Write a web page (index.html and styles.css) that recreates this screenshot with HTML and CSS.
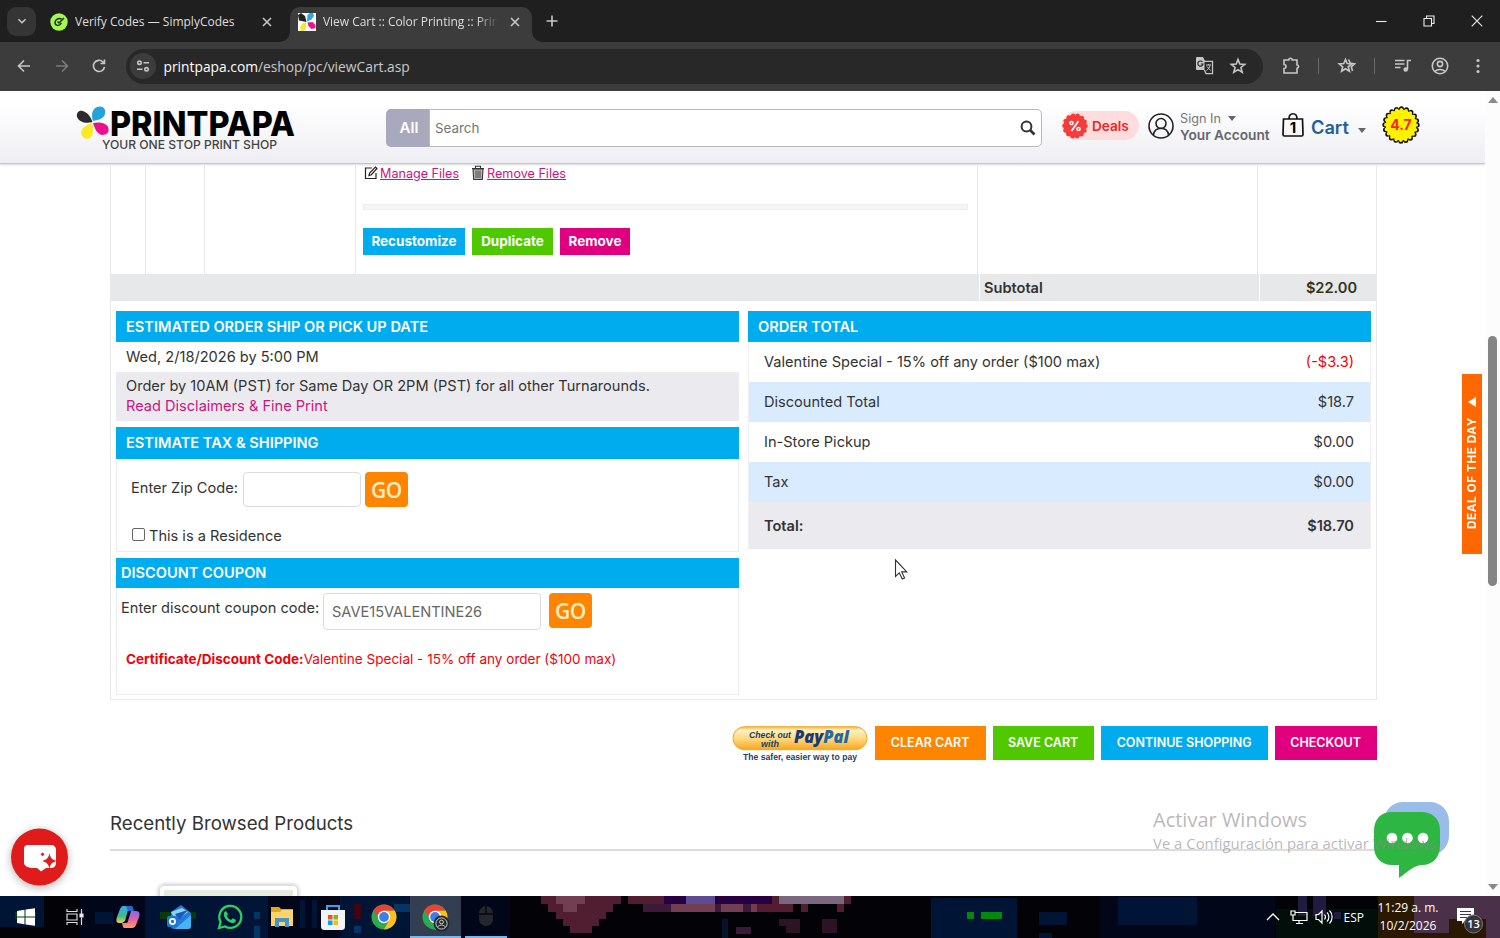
FILE: index.html
```html
<!DOCTYPE html>
<html lang="en">
<head>
    <meta charset="UTF-8">
    <title>View Cart :: Color Printing :: PrintPapa</title>
    <link rel="stylesheet" href="styles.css">
</head>
<body>
    <!-- Browser tabs -->
    <div class="tab-strip">
        <div class="tab-search">
            <svg width="12" height="12" viewBox="0 0 12 12"><path class="line" d="M2.5 4.2L6 7.7l3.5-3.5"/></svg>
        </div>
        <div class="tab">
            <svg width="18" height="18" viewBox="0 0 18 18">
                <circle cx="9" cy="9" r="8.7" fill="#a6f750"/>
                <path d="M11.5 6C8.500 4.500 5 6.500 5 9.500c0 3.500 4.500 4 6.500.5M7.500 8.500l1.500 1.500 5-5" fill="none" stroke="#17330a" stroke-width="1.500"/>
            </svg>
            <span class="tab-title t1">Verify Codes — SimplyCodes</span>
            <svg class="tab-close" width="12" height="12" viewBox="0 0 12 12"><path class="line" d="M2 2l8 8M10 2l-8 8"/></svg>
        </div>
        <div class="tab active">
            <svg width="18" height="18" viewBox="0 0 18 18">
                <rect width="18" height="18" fill="#fff"/>
                <path d="M8.500 9L1 7.500 0 2l3-2 4 3z" fill="#222"/>
                <path d="M9 8.500L9.500 2 12 0h3l1 3-3 4z" fill="#2aa9dc"/>
                <path d="M8 9.500L8 16l-3 2H3l-1-4 3-4z" fill="#fbe51d"/>
                <path d="M9.500 9.500l5-.5 3 3v3l-4 1-3-3z" fill="#ec118c"/>
            </svg>
            <span class="tab-title t2">View Cart :: Color Printing :: Prin</span>
            <svg class="tab-close" width="12" height="12" viewBox="0 0 12 12"><path class="line" d="M2 2l8 8M10 2l-8 8"/></svg>
        </div>
        <svg class="new-tab" width="14" height="14" viewBox="0 0 14 14"><path class="line" d="M7 1.500v11M1.500 7h11"/></svg>
        <div class="window-buttons">
            <svg width="12" height="12" viewBox="0 0 12 12"><path class="thin" d="M1 6.500h10.500"/></svg>
            <svg width="12" height="12" viewBox="0 0 12 12"><path class="thin" d="M1 3.500h7.500V11H1zM3.500 3.500V1H11v7.500H8.500"/></svg>
            <svg width="12" height="12" viewBox="0 0 12 12"><path class="thin" d="M.7.7l10.600 10.600M11.300.7L.7 11.300"/></svg>
        </div>
    </div>

    <!-- Address bar -->
    <div class="toolbar">
        <svg class="nav-icon" width="16" height="16" viewBox="0 0 16 16"><path class="line" d="M14 8H2.500M8 2.500L2.500 8 8 13.500"/></svg>
        <svg class="nav-icon dim" width="16" height="16" viewBox="0 0 16 16"><path class="line" d="M2 8h11.500M8 2.500L13.500 8 8 13.500"/></svg>
        <svg class="nav-icon" width="16" height="16" viewBox="0 0 16 16"><path class="line" d="M13.500 9A5.600 5.600 0 1 1 12 4l1.500 1.500M13.500 1.500v4h-4"/></svg>
        <div class="address">
            <div class="site-info">
                <svg width="14" height="14" viewBox="0 0 14 14"><circle class="line" cx="3.500" cy="3.700" r="1.700"/><circle class="line" cx="10.500" cy="10.300" r="1.700"/><path class="line" d="M7.500 3.700h5.500M1 10.300h5.500"/></svg>
            </div>
            <span class="url">printpapa.com<span>/eshop/pc/viewCart.asp</span></span>
            <svg class="translate" width="18" height="18" viewBox="0 0 18 18">
                <path d="M1 0h6l2 4h-.5v9H1a1 1 0 0 1-1-1V1a1 1 0 0 1 1-1z" fill="#c7c7c7"/>
                <path d="M8 4.300h8.500v12.400H10L8.500 13" fill="none" stroke="#c7c7c7" stroke-width="1.300"/>
                <path d="M6.500 5A2.600 2.600 0 1 0 7 7H4.800" fill="none" stroke="#292929" stroke-width="1.200"/>
                <path d="M10 8h5M12.500 7v1M11 9.500l3.500 4M14 8.500c-.5 2-2 4-3.500 5" fill="none" stroke="#c7c7c7"/>
            </svg>
            <svg class="star" width="16" height="16" viewBox="0 0 16 16"><path class="line" d="M8 1.500l1.800 4.600 4.900.3-3.800 3.100 1.300 4.800L8 11.600l-4.200 2.700 1.300-4.800L1.300 6.400l4.900-.3z"/></svg>
        </div>
        <div class="extensions">
            <svg width="18" height="18" viewBox="0 0 18 18"><path class="line" d="M2 3h4.800a1.700 1.700 0 0 1 3.400 0H15v5a1.500 1.500 0 0 1 0 3.200V16H2v-4.500a2 2 0 0 0 0-4z"/></svg>
            <i></i>
            <svg width="18" height="18" viewBox="0 0 18 18"><path class="line" d="M7.500 2.500l1.700 4.100 4.500.3-3.500 2.900 1.200 4.400-3.900-2.400-3.900 2.400 1.100-4.400-3.400-2.900 4.500-.3z"/><path class="line" d="M10.500 2.500l2 3.800 4 .5-3.200 3 1.200 4.200"/></svg>
            <i></i>
            <svg width="18" height="18" viewBox="0 0 18 18"><path class="line" d="M1 3.500h9.500M1 7h9.500M1 10.500h5.500M13.500 12.500V3.500H17"/><circle cx="11.700" cy="12.500" r="2.300" fill="#c7c7c7"/></svg>
            <svg width="18" height="18" viewBox="0 0 18 18"><circle class="line" cx="9" cy="9" r="7.700"/><circle class="line" cx="9" cy="7" r="2.600"/><path class="line" d="M3.800 14.500c2.500-2.700 7.900-2.700 10.400 0"/></svg>
            <svg width="18" height="18" viewBox="0 0 18 18" fill="#c7c7c7"><circle cx="9" cy="3.500" r="1.600"/><circle cx="9" cy="9" r="1.600"/><circle cx="9" cy="14.500" r="1.600"/></svg>
        </div>
    </div>

    <div class="viewport">
        <div class="page">
            <header class="site-header">
                <svg class="logo" width="220" height="50" viewBox="0 0 220 50">
                    <path d="M16.500 18C10 20 3 18 1 13 0 8 4 5 9 8c4 2 6 6 7.500 10z" fill="#2b2a2c"/>
                    <path d="M17 17c-2-6-1-12 4-14 6-2 9 2 8 7-1 4-6 6-12 7z" fill="#22a3dc"/>
                    <path d="M16 19c1 5 2 12-2 15-5 2-9-1-9-6 1-5 6-7 11-9z" fill="#fbe921"/>
                    <path d="M17 19c5-1 12-1 15 4 2 5-1 8-6 8-5-1-7-6-9-12z" fill="#ec0f8d"/>
                    <text class="logo-name" x="34" y="31.500" textLength="185" lengthAdjust="spacingAndGlyphs">PRINTPAPA</text>
                    <text class="logo-tag" x="26" y="45" textLength="175" lengthAdjust="spacingAndGlyphs">YOUR ONE STOP PRINT SHOP</text>
                </svg>
                <div class="search">
                    <span class="search-all">All</span>
                    <div class="search-box">
                        <span>Search</span>
                        <svg width="16" height="16" viewBox="0 0 16 16"><circle cx="6.500" cy="6.500" r="4.900" fill="none" stroke="#333" stroke-width="2"/><path d="M10 10l4.500 4.500" stroke="#333" stroke-width="2.600"/></svg>
                    </div>
                </div>
                <div class="deals">
                    <svg width="26" height="26" viewBox="0 0 26 26">
                        <circle cx="13" cy="13" r="10.800" fill="#f53b3b" stroke="#f53b3b" stroke-width="4" stroke-dasharray="0 4.847" stroke-linecap="round"/>
                        <circle cx="13" cy="13" r="11.500" fill="#f53b3b"/>
                        <path d="M16.500 8l-7 10" stroke="#fff" stroke-width="1.700"/>
                        <circle cx="9.500" cy="10" r="1.600" fill="none" stroke="#fff" stroke-width="1.500"/><circle cx="16.500" cy="16" r="1.600" fill="none" stroke="#fff" stroke-width="1.500"/>
                    </svg>
                    <span>Deals</span>
                </div>
                <svg class="user-icon" width="26" height="26" viewBox="0 0 26 26" fill="none" stroke="#222" stroke-width="1.600"><circle cx="13" cy="13" r="12"/><circle cx="13" cy="10.500" r="5"/><path d="M5.500 22c.3-9 14.700-9 15 0"/></svg>
                <div class="account">
                    <span class="sign-in">Sign In <i class="caret"></i></span>
                    <b>Your Account</b>
                </div>
                <svg class="bag" width="24" height="26" viewBox="0 0 24 26"><path d="M2.500 7h19l.5 15.500c0 1-.5 1.500-1.500 1.500h-17c-1 0-1.500-.5-1.500-1.500zM8 7C8 0 16 0 16 7" fill="none" stroke="#111" stroke-width="1.700"/><text x="12" y="20.500" text-anchor="middle">1</text></svg>
                <span class="cart-link">Cart</span><i class="caret cart-caret"></i>
                <svg class="rating" width="40" height="40" viewBox="0 0 40 40">
                    <circle cx="20" cy="20" r="16.200" fill="#111" stroke="#111" stroke-width="5" stroke-dasharray="0 5.089" stroke-linecap="round"/>
                    <circle cx="20" cy="20" r="15.200" fill="#fff100" stroke="#fff100" stroke-width="3.600" stroke-dasharray="0 4.775" stroke-linecap="round"/>
                    <text x="20" y="25" text-anchor="middle">4.7</text>
                </svg>
            </header>

            <main class="content">
                <div class="cart">
                    <div class="item-row">
                        <div class="col-qty"></div>
                        <div class="col-sku"></div>
                        <div class="col-thumb"></div>
                        <div class="col-detail">
                            <div class="file-links">
                                <svg width="14" height="14" viewBox="0 0 14 14" fill="none" stroke="#222" stroke-width="1.200"><path d="M8 2H1.500v10.500H12V7"/><path d="M5 9.500l.6-2.400L11.500 1 13 2.500 7.300 8.700z"/></svg>
                                <a>Manage Files</a>
                                <svg class="trash" width="14" height="16" viewBox="0 0 14 16" fill="none" stroke="#333" stroke-width="1.100"><path fill="#bbb" d="M2 4h10l-.7 10.500H2.700z"/><path d="M1 3.500h12M4.500 3V1.200h5V3"/><path stroke-width=".9" d="M5 5.500v7.500M7 5.500v7.500M9 5.500v7.500"/></svg>
                                <a>Remove Files</a>
                            </div>
                            <div class="rule"></div>
                            <div class="item-buttons">
                                <span class="btn blue">Recustomize</span>
                                <span class="btn green">Duplicate</span>
                                <span class="btn pink">Remove</span>
                            </div>
                        </div>
                        <div class="col-blank"></div>
                        <div class="col-price"></div>
                    </div>
                    <div class="subtotal">
                        <div class="sub-space"></div>
                        <div class="sub-label">Subtotal</div>
                        <div class="sub-value">$22.00</div>
                    </div>

                    <div class="panels">
                        <div class="left-panels">
                            <h2>ESTIMATED ORDER SHIP OR PICK UP DATE</h2>
                            <p class="ship-date">Wed, 2/18/2026 by 5:00 PM</p>
                            <p class="ship-note">Order by 10AM (PST) for Same Day OR 2PM (PST) for all other Turnarounds.<br><a>Read Disclaimers &amp; Fine Print</a></p>
                            <h2 class="tax-title">ESTIMATE TAX &amp; SHIPPING</h2>
                            <div class="tax-body">
                                <div class="zip-row">
                                    <label>Enter Zip Code:</label>
                                    <div class="input zip"></div>
                                    <span class="go">GO</span>
                                </div>
                                <div class="residence"><i class="checkbox"></i>This is a Residence</div>
                            </div>
                            <h2 class="coupon-title">DISCOUNT COUPON</h2>
                            <div class="coupon-body">
                                <div class="coupon-row">
                                    <label>Enter discount coupon code:</label>
                                    <div class="input code">SAVE15VALENTINE26</div>
                                    <span class="go">GO</span>
                                </div>
                                <p class="coupon-msg"><b>Certificate/Discount Code:</b>Valentine Special - 15% off any order ($100 max)</p>
                            </div>
                        </div>
                        <div class="order-total">
                            <h2>ORDER TOTAL</h2>
                            <div class="total-row"><span>Valentine Special - 15% off any order ($100 max)</span><span class="red">(-$3.3)</span></div>
                            <div class="total-row shade"><span>Discounted Total</span><span>$18.7</span></div>
                            <div class="total-row"><span>In-Store Pickup</span><span>$0.00</span></div>
                            <div class="total-row shade"><span>Tax</span><span>$0.00</span></div>
                            <div class="total-row grand"><span>Total:</span><span>$18.70</span></div>
                        </div>
                    </div>
                </div>

                <div class="actions">
                    <svg class="paypal" width="136" height="38" viewBox="0 0 136 38">
                        <defs><linearGradient id="gold" x2="0" y2="1"><stop offset="0" stop-color="#fdb933"/><stop offset=".15" stop-color="#fff0c4"/><stop offset=".5" stop-color="#ffdb83"/><stop offset="1" stop-color="#fba51c"/></linearGradient></defs>
                        <rect x="1" y=".7" width="134" height="23" rx="11.500" fill="url(#gold)" stroke="#f5a623"/>
                        <text class="pp-small" x="17" y="12" textLength="42" lengthAdjust="spacingAndGlyphs">Check out</text>
                        <text class="pp-small" x="29" y="20.500" textLength="18" lengthAdjust="spacingAndGlyphs">with</text>
                        <text class="pp-name" x="62" y="17" textLength="55" lengthAdjust="spacingAndGlyphs">Pay<tspan fill="#23689f">Pal</tspan></text>
                        <text class="pp-tag" x="11" y="34" textLength="114" lengthAdjust="spacingAndGlyphs">The safer, easier way to pay</text>
                    </svg>
                    <span class="action orange">CLEAR CART</span>
                    <span class="action green save">SAVE CART</span>
                    <span class="action blue continue">CONTINUE SHOPPING</span>
                    <span class="action pink checkout">CHECKOUT</span>
                </div>

                <h3>Recently Browsed Products</h3>
                <div class="product-card"><div></div></div>
            </main>
        </div>
        <div class="scrollbar">
            <i class="arrow-up"></i>
            <i class="thumb"></i>
            <i class="arrow-down"></i>
        </div>

        <div class="deal-tab"><span>DEAL OF THE DAY</span><i></i></div>

        <svg class="red-chat" width="70" height="70" viewBox="0 0 70 70">
            <circle cx="34.500" cy="35" r="28.500" fill="#e01b1b"/>
            <path d="M22.500 23H46c3 0 5 2 5 5v12c0 3-1 6-5 6h-5l-5 3.500-4-3.500h-4c-4 0-9-2-9-5V27c0-3 1.500-4 3.500-4z" fill="#fff"/>
            <path d="M44.500 31c1 5 2 6.500 7.500 8-5.500 1.500-6.500 3-7.500 8-1-5-2.500-6.500-7.500-8 5-1.500 6.500-3 7.500-8zM37.500 30.500l2 1.700-2 2-2-2z" fill="#e01b1b"/>
        </svg>

        <svg class="green-chat" width="78" height="80" viewBox="0 0 78 80">
            <rect x="11" y="2" width="65" height="53" rx="19" fill="#9abce8"/>
            <path d="M19 12h29c12 0 19 7 19 18v16c0 11-7 19-18 19-7 0-12 5-23 13V65h-7C8 65 1 57 1 47V31c0-12 7-19 18-19z" fill="#2db742"/>
            <circle cx="19" cy="38" r="5.300" fill="#fff"/><circle cx="34.500" cy="38" r="5.300" fill="#fff"/><circle cx="50" cy="38" r="5.300" fill="#fff"/>
        </svg>

        <div class="watermark">
            <div class="wm-title">Activar Windows</div>
            <div class="wm-text">Ve a Configuración para activar Windows.</div>
        </div>

        <svg class="cursor" width="14" height="22" viewBox="0 0 14 22"><path d="M1.500 1v16.500l3.800-3.600 3 6.100 2.300-1.100-2.900-6h5.100z" fill="#fff" stroke="#333" stroke-width="1.100"/></svg>
    </div>

    <!-- Windows taskbar -->
    <footer class="taskbar">
        <svg class="wallpaper" width="1500" height="42" viewBox="0 0 1500 42">
            <path fill="#020619" d="M80 0h430v42H80zM1100 0h175v42h-175z"/>
            <path fill="#001535" d="M0 0h44v31H0zM145 0h123v42H145zM931 2h86v40h-86zM1039 16h28v13h-28zM1118 1h79v28h-79zM95 16h18v12H95zM300 4h5v28h-5zM312 4h5v28h-5zM340 0h70v42h-70zM1039 37h13v5h-13z"/>
            <path fill="#063563" d="M254 16h6v7h-6zM254 30h6v12h-6zM354 30h7v7h-7zM394 8h54v8h-54z"/>
            <path fill="#063a08" d="M15 16h21v7H15zM160 16h36v7h-36z"/>
            <path fill="#3d0711" d="M354 8h7v15h-7z"/>
            <path fill="#511d31" d="M541 0h80v8h-8v8h-7v7h-7v7h-7v7h-22v-7h-7v-7h-7v-7h-8V8h-7zM628 0h36v8h-36zM757 8h36v8h-36zM772 0h7v8h-7zM844 0h7v8h-7zM801 8h7v8h-7zM837 8h7v8h-7z"/>
            <path fill="#713f51" d="M556 0h29v8h-8v8h-14V8h-7zM671 8h44v8h-44zM721 8h22v8h-22zM751 8h6v8h-6z"/>
            <path fill="#280041" d="M664 0h108v8H664z"/>
            <path fill="#3b1939" d="M643 8h28v8h-28zM715 8h6v8h-6zM743 8h8v8h-8zM736 31h15v7h-15z"/>
            <path fill="#5f4b91" d="M686 0h29v8h-29z"/>
            <path fill="#7a697e" d="M779 0h65v8h-65z"/>
            <path fill="#2c1424" d="M779 23h21v14h-14v-7h-7zM822 23h15v14h-15z"/>
            <path fill="#07132a" d="M722 23h6v19h-6z"/>
            <path fill="#008a0c" d="M967 16h7v7h-7zM981 16h21v7h-21z"/>
            <path fill="#020e0a" d="M1276 13h102v29h-102z"/>
            <path fill="#211b43" d="M1298 0h9v20h-9zM1313 0h13v20h-13zM1334 16h7v7h-7z"/>
            <path fill="#2b1801" d="M1378 0h122v42h-122z"/>
            <path fill="#4b3049" d="M1414 0h86v42h-14V23h-37v14h-35z"/>
        </svg>
        <div class="apps">
            <div class="app"><svg width="18" height="18" viewBox="0 0 18 18"><path fill="#fff" d="M0 3l7.500-1.200v6.700H0zM8.500 1.600L18 .2v8.300H8.500zM0 9.500h7.500v6.700L0 15zM8.500 9.500H18v8.300l-9.500-1.400z"/></svg></div>
            <div class="app taskview"><svg width="18" height="18" viewBox="0 0 18 18" fill="none" stroke="#ddd" stroke-width="1.200"><path d="M1 1v2.500h10V1M1 17v-2.500h10V17M1 6h10v6H1zM15.500 1v5M15.500 9.500V17"/><path d="M14 6h3v3h-3z" fill="#fff"/></svg></div>
            <div class="app"><svg width="24" height="24" viewBox="0 0 24 24">
                <defs><linearGradient id="cpa" x2="0" y2="1"><stop stop-color="#3aa7f1"/><stop offset=".6" stop-color="#42b98b"/><stop offset="1" stop-color="#f4cf45"/></linearGradient><linearGradient id="cpb" x2="0" y2="1"><stop stop-color="#7c68ef"/><stop offset=".5" stop-color="#e561a3"/><stop offset="1" stop-color="#ffa05e"/></linearGradient></defs>
                <path fill="url(#cpa)" d="M7 1h8l-3 4-3 11-3 2H3c-3 0-3-3-2-6l3-8c1-2 2-3 3-3z"/><path fill="#2469cf" d="M10 1h5c2 0 2 1 3 5h-6z"/><path fill="url(#cpb)" d="M15 6h5c4 0 4 3 3 6l-3 8c-1 2-2 3-4 3H9c-2 0-2-1-3-5h4c1 0 2-1 2-2z"/>
            </svg></div>
            <div class="app"><svg width="26" height="26" viewBox="0 0 26 26"><path fill="#2877df" d="M5 8L15 1l10 8v13c0 2-1 3-3 3H8c-2 0-3-1-3-3z"/><path fill="#8bd3ff" d="M5 8l11-4 6 4-12 9z"/><path fill="#1b59bd" d="M9 10l13-4-9 10z"/><path fill="#43b5f4" d="M25 11L9 25h13c2 0 3-1 3-3z"/><rect x="1" y="12" width="11" height="11" rx="2" fill="#147bd1"/><circle cx="6.500" cy="17.500" r="2.600" fill="none" stroke="#fff" stroke-width="1.700"/></svg></div>
            <div class="app"><svg width="26" height="26" viewBox="0 0 26 26"><path d="M2 24l1.600-6A11 11 0 1 1 8 22.500z" fill="none" stroke="#29cf68" stroke-width="2.300"/><path d="M9 7l2 3-1.200 2c1 2 2 3 4.200 4l1.800-1.700 3.200 1.700c-.5 3-3 3.500-5 2.800-4-1.300-6-4-7-6.800C6.400 9.500 7 7.500 9 7z" fill="#29cf68"/></svg></div>
            <div class="app"><svg width="24" height="22" viewBox="0 0 24 22"><path fill="#e2a51e" d="M1 1h8l2 2h12v8H1z"/><path fill="#ffd36a" d="M1 6h9l2-2h11v16H1z"/><path fill="#4396c8" d="M5 12h14v9h-4v-5H9v5H5z"/></svg></div>
            <div class="app"><svg width="26" height="28" viewBox="0 0 26 28"><path d="M7 8V3h12v5" fill="none" stroke="#28a9e9" stroke-width="2"/><path fill="#f3f3f3" d="M1 7h24v16c0 3-1 4-4 4H5c-3 0-4-1-4-4z"/><path fill="#ef5325" d="M8 12h4.500v4.500H8z"/><path fill="#80bb0a" d="M13.500 12H18v4.500h-4.500z"/><path fill="#00a4e8" d="M8 17.500h4.500V22H8z"/><path fill="#ffb900" d="M13.500 17.500H18V22h-4.500z"/></svg></div>
            <div class="app"><svg width="26" height="26" viewBox="0 0 26 26"><circle cx="13" cy="13" r="12.500" fill="#2da94f"/><path fill="#ea4335" d="M2.200 6.800a12.500 12.500 0 0 1 21.600 0H13v12z"/><path fill="#fbc116" d="M23.800 6.800A12.500 12.500 0 0 1 13 25.500l5.400-9.400L13 6.800z"/><circle cx="13" cy="13" r="6.200" fill="#fff"/><circle cx="13" cy="13" r="4.900" fill="#3f7ee8"/></svg></div>
            <div class="app running"><svg width="28" height="28" viewBox="0 0 28 28"><circle cx="13" cy="13" r="12.500" fill="#2da94f"/><path fill="#ea4335" d="M2.200 6.800a12.500 12.500 0 0 1 21.600 0H13v12z"/><path fill="#fbc116" d="M23.800 6.800A12.500 12.500 0 0 1 13 25.500l5.400-9.400L13 6.800z"/><circle cx="13" cy="13" r="6.200" fill="#fff"/><circle cx="13" cy="13" r="4.900" fill="#3f7ee8"/><circle cx="19.500" cy="19.500" r="8" fill="#25282b"/><circle cx="19.500" cy="19.500" r="5.600" fill="none" stroke="#ccc"/><circle cx="19.500" cy="18" r="1.900" fill="none" stroke="#ccc"/><path d="M15.500 23c2-2.600 6-2.600 8 0" fill="none" stroke="#ccc"/></svg></div>
            <div class="app mouse"><svg width="16" height="22" viewBox="0 0 16 22"><rect x="1" y="1" width="14" height="20" rx="7" fill="#24262d"/><path d="M1 9h14M8 1v8" stroke="#05060b" stroke-width="1.300"/></svg></div>
        </div>
        <div class="tray">
            <svg width="14" height="8" viewBox="0 0 14 8"><path d="M1 7l6-6 6 6" fill="none" stroke="#fff" stroke-width="1.300"/></svg>
            <svg class="network" width="18" height="16" viewBox="0 0 18 16" fill="none" stroke="#fff" stroke-width="1.200"><path d="M5 3.500h12v8H3V7M9 11.500v3M6 14.500h7M1 2h4v4H1zM3 6v2"/></svg>
            <svg class="volume" width="18" height="16" viewBox="0 0 18 16" fill="none" stroke="#fff" stroke-width="1.200"><path d="M1 5.500h2.500L7 2v12L3.500 10.500H1zM9.500 5.500c1.200 1.500 1.200 3.500 0 5M12 3.500c2.500 2.500 2.500 6.500 0 9M14.500 1.500c3.500 3.500 3.500 9.500 0 13"/></svg>
            <span class="lang">ESP</span>
            <div class="clock"><span>11:29 a. m.</span><span>10/2/2026</span></div>
            <svg class="notify" width="28" height="28" viewBox="0 0 28 28"><path fill="#fff" d="M1 2h17v13H9l-3 3v-3H1z"/><path d="M4 5.500h11M4 8.500h11M4 11.500h7" stroke="#4b3049"/><circle cx="17.500" cy="18" r="9" fill="#36363a" stroke="#77777a"/><text x="17.500" y="22" text-anchor="middle">13</text></svg>
        </div>
    </footer>
</body>
</html>
```
FILE: styles.css
```css
* {
    box-sizing: border-box;
}

body {
    margin: 0;
    width: 1500px;
    height: 938px;
    overflow: hidden;
    display: flex;
    flex-direction: column;
    background: #fff;
    color: #333;
    font-family: Inter, "Liberation Sans", sans-serif;
    font-size: 14.58px;
}

svg {
    display: block;
    flex: none;
    overflow: visible;
}

h2, h3, p {
    margin: 0;
}

.line {
    fill: none;
    stroke: #c7c7c7;
    stroke-width: 1.6;
}

.thin {
    fill: none;
    stroke: #eee;
    stroke-width: 1.1;
}

/* Browser */
.tab-strip {
    height: 42px;
    flex: none;
    background: #1f1f1f;
    display: flex;
    align-items: center;
    padding-left: 7px;
    font-family: "Open Sans", sans-serif;
    font-size: 12px;
    color: #dedede;
}

.tab-search {
    width: 29px;
    height: 29px;
    border-radius: 9px;
    background: #353535;
    display: flex;
    align-items: center;
    justify-content: center;
}

.tab {
    width: 242px;
    height: 35px;
    display: flex;
    align-items: center;
    padding: 0 5px 0 14px;
    margin-top: 1px;
}

.tab.active {
    position: relative;
    background: #3c3c3c;
    border-radius: 10px 10px 0 0;
    margin-top: 7px;
    padding: 0 11px 6px 8px;
    margin-left: 12px;
}

.tab.active::before,
.tab.active::after {
    content: "";
    position: absolute;
    bottom: 0;
    left: -10px;
    width: 10px;
    height: 10px;
    background: radial-gradient(circle at 0 0, #1f1f1f 9.5px, #3c3c3c 10px);
}

.tab.active::after {
    left: auto;
    right: -10px;
    background: radial-gradient(circle at 100% 0, #1f1f1f 9.5px, #3c3c3c 10px);
}

.tab-title {
    flex: 1;
    margin-left: 7px;
    white-space: nowrap;
    overflow: hidden;
}

.t2 {
    margin-right: 11px;
    -webkit-mask-image: linear-gradient(90deg, #000 88%, transparent);
    mask-image: linear-gradient(90deg, #000 88%, transparent);
    letter-spacing: -0.03px;
}

.new-tab {
    margin-left: 13px;
}

.window-buttons {
    margin-left: auto;
    margin-right: 17px;
    display: flex;
    gap: 36px;
}

.toolbar {
    height: 49px;
    flex: none;
    background: #3c3c3c;
    display: flex;
    align-items: center;
    padding: 0 0 1px 16px;
}

.nav-icon {
    margin-right: 21.5px;
}

.nav-icon.dim {
    opacity: 0.45;
}

.address {
    width: 1137px;
    height: 35px;
    margin-left: -3px;
    border-radius: 18px;
    background: #282828;
    display: flex;
    align-items: center;
    padding-left: 4px;
}

.site-info {
    width: 26px;
    height: 26px;
    border-radius: 50%;
    background: #3c3c3c;
    display: flex;
    align-items: center;
    justify-content: center;
}

.url {
    flex: 1;
    margin-left: 8px;
    font-family: "Open Sans", sans-serif;
    font-size: 13.8px;
    color: #fff;
}

.url span {
    color: #c9c9c9;
}

.translate {
    margin-right: 16px;
}

.star {
    margin-right: 17px;
}

.extensions {
    display: flex;
    align-items: center;
    margin-left: 19px;
}

.extensions i {
    width: 1px;
    height: 16px;
    background: #6a6a6a;
    margin: 0 18.5px;
}

.extensions svg + svg {
    margin-left: 19.5px;
}

/* Site */
.viewport {
    position: relative;
    height: 805px;
    flex: none;
    display: flex;
    overflow: hidden;
}

.page {
    width: 1485px;
}

.site-header {
    height: 73px;
    display: flex;
    align-items: center;
    padding: 0 0 4px 76px;
    background: linear-gradient(#fff 20%, #eeeef3);
    border-bottom: 1px solid #c6c6ca;
    box-shadow: 0 1px 2px rgba(0, 0, 0, 0.15);
}

.logo {
    margin-top: 8px;
}

.logo-name {
    font-size: 34.5px;
    font-weight: 800;
    fill: #000;
}

.logo-tag {
    font-size: 12px;
    font-weight: 500;
    fill: #444;
}

.search {
    width: 656px;
    height: 38px;
    margin: 5px 0 0 90px;
    display: flex;
}

.search-all {
    width: 43px;
    background: #a9a9bd;
    border-radius: 5px 0 0 5px;
    color: #fff;
    font-size: 15px;
    font-weight: 600;
    text-align: center;
    line-height: 38px;
    padding-left: 3px;
}

.search-box {
    flex: 1;
    display: flex;
    align-items: center;
    justify-content: space-between;
    padding: 0 5px;
    border: 1px solid #b9b9bd;
    border-radius: 0 5px 5px 0;
    background: #fff;
    color: #757575;
    font-size: 13.4px;
}

.deals {
    width: 77px;
    height: 29px;
    margin: 1px 9px 0 20px;
    border-radius: 15px;
    background: #ffdddd;
    display: flex;
    align-items: center;
    gap: 4px;
    color: #f52323;
    font-size: 13.6px;
    font-weight: 600;
}

.user-icon {
    margin-top: 1px;
}

.account {
    width: 96px;
    margin: 3px 0 0 6px;
    display: flex;
    flex-direction: column;
    line-height: 16px;
    font-size: 12.7px;
    color: #777;
}

.account b {
    font-size: 13.7px;
    font-weight: 600;
    color: #65656c;
}

.caret {
    display: inline-block;
    border: 4px solid transparent;
    border-top: 5px solid #666;
    border-bottom: 0;
    margin: 0 0 2px 3px;
}

.bag {
    margin-left: 5px;
}

.bag text {
    font-size: 15px;
    font-weight: 700;
}

.cart-link {
    margin: 4px 0 0 6px;
    font-size: 18.2px;
    font-weight: 600;
    color: #1d5f9f;
}

.cart-caret {
    margin: 10px 0 0 9px;
}

.rating {
    margin-left: 15px;
}

.rating text {
    font-size: 14px;
    font-weight: 700;
    fill: #f22;
}

.content {
    width: 1267px;
    margin-left: 110px;
}

.cart {
    height: 536px;
    border: 1px solid #e9e9eb;
    border-top: 0;
}

.item-row {
    height: 110px;
    display: flex;
}

.item-row > div {
    border-right: 1px solid #e9e9eb;
}

.col-qty {
    width: 35px;
}

.col-sku {
    width: 59px;
}

.col-thumb {
    width: 151px;
}

.col-detail {
    width: 622px;
    padding: 0 9px 0 7px;
}

.col-blank {
    width: 280px;
}

.item-row > .col-price {
    flex: 1;
    border: 0;
}

.file-links {
    height: 18px;
    display: flex;
    align-items: center;
    font-size: 12.6px;
    padding-left: 1px;
}

.file-links a {
    margin-left: 2px;
    text-decoration: underline;
}

.trash {
    margin-left: 12px;
}

a {
    color: #cf1282;
}

.rule {
    height: 6px;
    margin-top: 22px;
    background: #f5f5f5;
    border: 1px solid #eee;
}

.item-buttons {
    display: flex;
    gap: 7px;
    margin-top: 18px;
}

.btn {
    height: 27px;
    line-height: 27px;
    text-align: center;
    color: #fff;
    font-size: 13.5px;
    font-weight: 700;
    width: 102px;
}

.btn.green {
    width: 81px;
}

.btn.pink {
    width: 70px;
}

.blue {
    background: #00aced;
}

.green {
    background: #50c800;
}

.pink {
    background: #e0007f;
}

.orange {
    background: #ff8500;
}

.subtotal {
    height: 27px;
    display: flex;
    line-height: 28px;
    font-weight: 600;
}

.subtotal > div {
    background: #e7e8ea;
}

.sub-space {
    width: 868px;
}

.sub-label {
    width: 279px;
    margin: 0 1px;
    padding-left: 4px;
}

.sub-value {
    flex: 1;
    padding-right: 19px;
    text-align: right;
    color: #33331a;
}

.panels {
    display: flex;
    gap: 9px;
    padding: 10px 5px 0;
}

.left-panels,
.order-total {
    width: 623px;
}

h2 {
    height: 31px;
    line-height: 32px;
    padding-left: 10px;
    background: #00aced;
    color: #fff;
    font-size: 14.58px;
    font-weight: 600;
}

.ship-date {
    height: 30px;
    line-height: 30px;
    padding-left: 10px;
}

.ship-note {
    height: 49px;
    padding: 4px 0 0 10px;
    line-height: 20px;
    background: #ebebef;
}

.tax-title {
    height: 32px;
    line-height: 32px;
    margin-top: 6px;
}

.tax-body {
    height: 93px;
    padding: 13px 14px;
    border: 1px solid #ececee;
    border-top: 0;
}

.zip-row,
.coupon-row {
    display: flex;
}

.zip-row label {
    width: 112px;
    line-height: 32px;
}

.input {
    border: 1px solid #dcdce0;
    border-radius: 4px;
    background: #fff;
    color: #666;
}

.zip {
    width: 118px;
    height: 35px;
}

.go {
    width: 43px;
    height: 35px;
    margin-left: 4px;
    border-radius: 4px;
    background: #ff8500;
    color: #ffedc5;
    font-family: "Open Sans", sans-serif;
    font-size: 21px;
    font-weight: 600;
    line-height: 36px;
    text-align: center;
    letter-spacing: -0.5px;
}

.residence {
    display: flex;
    align-items: center;
    margin-top: 20px;
}

.checkbox {
    width: 13px;
    height: 13px;
    margin: -3px 4px 0 1px;
    border: 1px solid #666;
    border-radius: 2px;
}

.coupon-title {
    height: 30px;
    line-height: 30px;
    margin-top: 6px;
    padding-left: 5px;
}

.coupon-body {
    height: 107px;
    padding: 5px 0 0 4px;
    border: 1px solid #ececee;
    border-top: 0;
}

.coupon-row label {
    width: 202px;
    line-height: 30px;
}

.code {
    width: 218px;
    height: 37px;
    line-height: 36px;
    padding-left: 8px;
}

.coupon-row .go {
    margin-left: 8px;
}

.coupon-msg {
    margin: 21px 0 0 5px;
    font-size: 13.55px;
    color: #f30008;
}

.coupon-msg b {
    font-weight: 700;
}

.total-row {
    height: 40px;
    padding: 0 16px 1px 15px;
    display: flex;
    align-items: center;
    justify-content: space-between;
    border: solid #f0f0f2;
    border-width: 0 1px;
}

.shade {
    background: #d9ecff;
}

.grand {
    height: 47px;
    padding-bottom: 0;
    background: #ebebef;
    font-weight: 600;
}

.red {
    color: #f30008;
}

.actions {
    display: flex;
    justify-content: flex-end;
    margin-top: 26px;
    padding-right: 0.4px;
}

.action {
    width: 111px;
    height: 34px;
    margin-left: 7px;
    color: #fff;
    font-size: 12.5px;
    font-weight: 600;
    line-height: 34px;
    text-align: center;
}

.save {
    width: 101px;
}

.continue {
    width: 167px;
}

.checkout {
    width: 102px;
}

.pp-small {
    font-family: "Liberation Sans", sans-serif;
    font-size: 9.5px;
    font-style: italic;
    font-weight: 700;
    fill: #243d66;
}

.pp-name {
    font-family: "Open Sans", sans-serif;
    font-size: 18px;
    font-style: italic;
    font-weight: 800;
    fill: #193a72;
}

.pp-tag {
    font-family: "Liberation Sans", sans-serif;
    font-size: 9px;
    font-weight: 700;
    fill: #243d66;
}

h3 {
    height: 53px;
    margin-top: 34px;
    padding-top: 15px;
    border-bottom: 2px solid #ddd;
    font-size: 18.7px;
    font-weight: 400;
    line-height: 22px;
}

.product-card {
    width: 139px;
    height: 40px;
    margin: 34px 0 0 49px;
    padding: 4px;
    border: 1px solid #ddd;
    border-radius: 5px;
    box-shadow: 0 0 4px rgba(0, 0, 0, 0.3);
}

.product-card div {
    height: 30px;
    background: #e7ebdb;
}

.scrollbar {
    position: relative;
    width: 15px;
    background: #fcfcfc;
}

.scrollbar i {
    position: absolute;
    left: 3px;
}

.arrow-up,
.arrow-down {
    border: 5px solid transparent;
}

.arrow-up {
    top: 6px;
    border-top: 0;
    border-bottom: 6px solid #888;
}

.arrow-down {
    bottom: 6px;
    border-bottom: 0;
    border-top: 6px solid #888;
}

.thumb {
    top: 245px;
    width: 9px;
    height: 250px;
    border-radius: 5px;
    background: #858585;
}

/* Floating things over the page */
.deal-tab {
    position: absolute;
    left: 1462px;
    top: 282.5px;
    width: 20px;
    height: 180px;
    background: #ff6700;
    display: flex;
    align-items: center;
    padding-top: 25px;
    writing-mode: vertical-rl;
    transform: rotate(180deg);
    color: #fff;
    font-size: 11.8px;
    font-weight: 700;
    letter-spacing: 0.53px;
}

.deal-tab i {
    margin-top: 10px;
    border: 5px solid transparent;
    border-left: 8px solid #fff;
    border-right: 0;
}

.red-chat {
    position: absolute;
    left: 5px;
    top: 731px;
    filter: drop-shadow(0 2px 4px rgba(0, 0, 0, 0.3));
}

.green-chat {
    position: absolute;
    left: 1373px;
    top: 709px;
}

.watermark {
    position: absolute;
    left: 1153px;
    top: 714px;
    font-family: "Open Sans", sans-serif;
    color: rgba(140, 135, 140, 0.6);
    white-space: nowrap;
}

.wm-title {
    font-size: 20px;
    line-height: 29px;
}

.wm-text {
    font-size: 14.9px;
    line-height: 19px;
}

.cursor {
    position: absolute;
    left: 894px;
    top: 468px;
}

/* Taskbar */
.taskbar {
    position: relative;
    height: 42px;
    flex: none;
    display: flex;
    background: #020207;
    color: #fff;
    font-family: "Open Sans", sans-serif;
}

.wallpaper {
    position: absolute;
    left: 0;
    top: 0;
}

.apps {
    position: relative;
    display: flex;
}

.app {
    width: 51.2px;
    display: flex;
    align-items: center;
    justify-content: center;
}

.taskview {
    padding-right: 3px;
}

.running {
    background: #343e52;
    border-bottom: 2px solid #76b9ed;
}

.running svg {
    margin: 3px 0 0 2px;
}

.mouse {
    width: 42px;
    margin-left: 4px;
    border-bottom: 2px solid #76b9ed;
}

.tray {
    position: relative;
    margin-left: auto;
    display: flex;
    align-items: center;
    font-size: 12px;
}

.network {
    margin-left: 10px;
}

.volume {
    margin-left: 7px;
}

.lang {
    margin-left: 11px;
}

.clock {
    width: 60px;
    margin-left: 14px;
    display: flex;
    flex-direction: column;
    align-items: center;
    line-height: 18.5px;
    white-space: nowrap;
}

.notify {
    margin: 6px 16px 0 18px;
}

.notify text {
    font-size: 11px;
    font-weight: 600;
    fill: #fff;
}
```
